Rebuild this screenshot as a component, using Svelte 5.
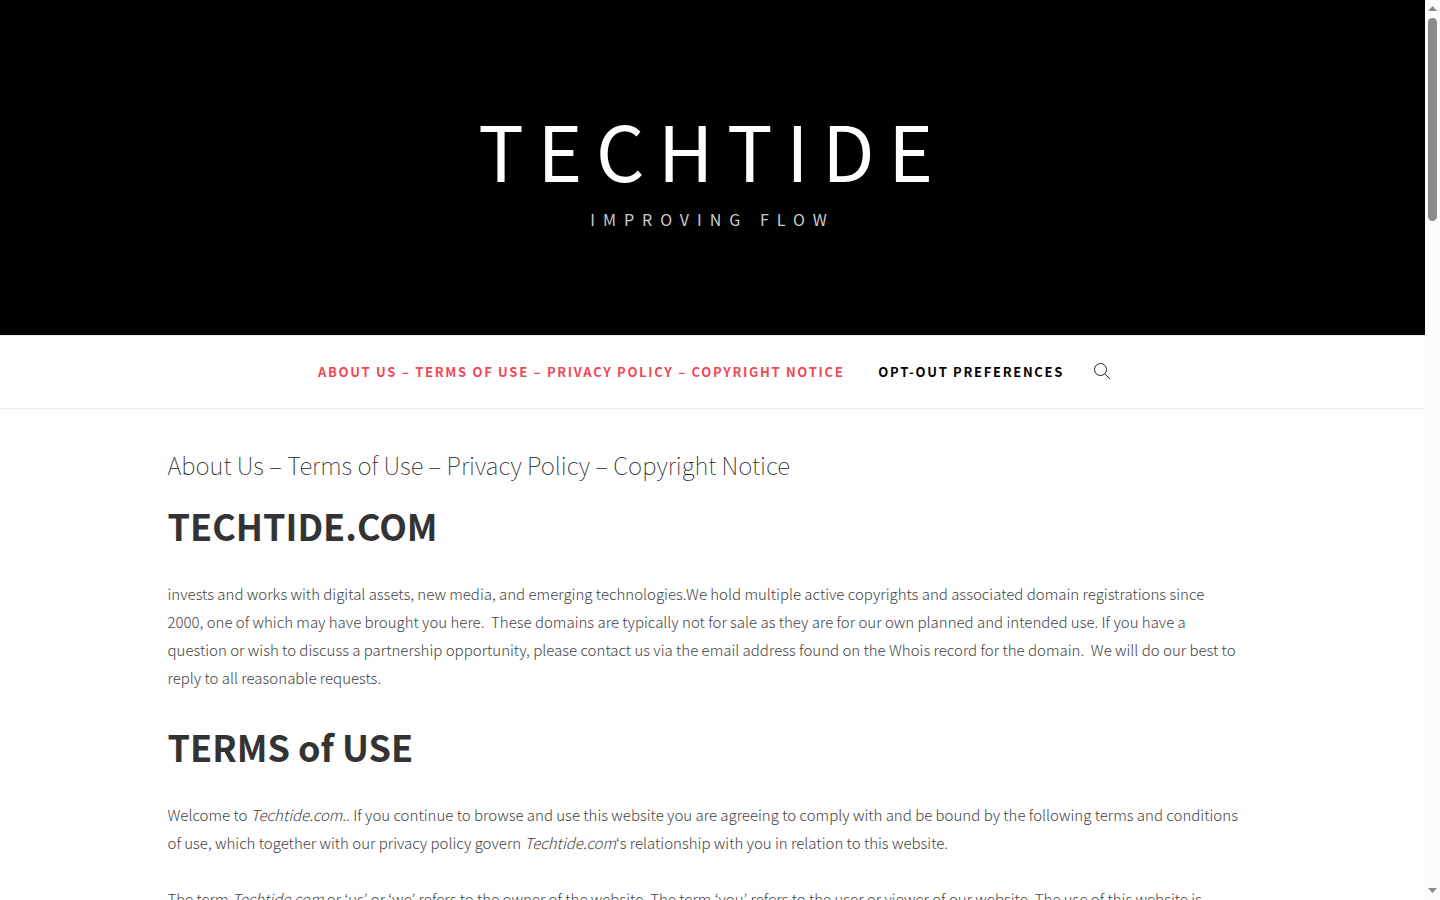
<script>
  const navLinks = [
    { label: "About Us – Terms of Use – Privacy Policy – Copyright Notice", href: "#about", current: true },
    { label: "Opt-out preferences", href: "#opt-out", current: false }
  ];
</script>

<div class="viewport">
  <div class="page">
    <header class="masthead">
      <a class="site-title" href="#home">TECHTIDE</a>
      <p class="tagline">IMPROVING FLOW</p>
    </header>

    <nav class="main-nav" aria-label="Primary">
      {#each navLinks as link}
        <a href={link.href} class:current={link.current} aria-current={link.current ? "page" : undefined}>{link.label}</a>
      {/each}
      <button type="button" class="search" aria-label="Search">
        <svg viewBox="0 0 18 18" aria-hidden="true" focusable="false">
          <circle cx="7.5" cy="7.5" r="6" />
          <path d="M11.8 11.8 17 17" />
        </svg>
      </button>
    </nav>

    <main class="content">
      <h1>About Us – Terms of Use – Privacy Policy – Copyright Notice</h1>

      <h2>TECHTIDE.COM</h2>
      <p>
        invests and works with digital assets, new media, and emerging technologies.We hold multiple active copyrights and associated domain registrations since 2000, one of which may have brought you here.&nbsp; These domains are typically not for sale as they are for our own planned and intended use. If you have a question or wish to discuss a partnership opportunity, please contact us via the email address found on the Whois record for the domain.&nbsp; We will do our best to reply to all reasonable requests.
      </p>

      <h2>TERMS of USE</h2>
      <p>
        Welcome to <em>Techtide.com.</em>. If you continue to browse and use this website you are agreeing to comply with and be bound by the following terms and conditions of use, which together with our privacy policy govern <em>Techtide.com</em>‘s relationship with you in relation to this website.
      </p>
      <p>
        The term <em>Techtide.com</em> or ‘us’ or ‘we’ refers to the owner of the website. The term ‘you’ refers to the user or viewer of our website. The use of this website is
      </p>
    </main>
  </div>

  <div class="scrollbar" aria-hidden="true">
    <svg viewBox="0 0 15 18"><path d="M3 11h9L7.5 6z" /></svg>
    <div class="track"><div class="thumb"></div></div>
    <svg viewBox="0 0 15 18"><path d="M3 6h9L7.5 11z" /></svg>
  </div>
</div>

<style>
  :global(body) {
    margin: 0;
    background: #fefefe;
  }

  .viewport {
    display: flex;
    height: 100vh;
    overflow: hidden;
    font-family: "Source Sans Pro", "Noto Sans CJK KR", sans-serif;
    color: #333;
  }

  .page {
    flex: 1;
    min-width: 0;
  }

  .masthead {
    padding: 94px 24px 102px;
    text-align: center;
    color: #fff;
    background: #000;
  }

  .site-title {
    display: block;
    font-size: 76px;
    line-height: 111px;
    letter-spacing: 0.18em;
    color: inherit;
    text-decoration: none;
  }

  .tagline {
    margin: 0;
    font-size: 16px;
    line-height: 28px;
    letter-spacing: 0.5em;
    color: #ccc;
  }

  .main-nav {
    display: flex;
    justify-content: center;
    align-items: center;
    gap: 34px;
    height: 70px;
    padding: 0 0 2px 4px;
    border-top: 1px solid #eee;
    border-bottom: 1px solid #eee;
    background: #fff;
  }

  .main-nav a {
    font-size: 13px;
    font-weight: 700;
    letter-spacing: 0.13em;
    text-transform: uppercase;
    text-decoration: none;
    color: #000;
  }

  .main-nav a.current {
    color: #ef4856;
  }

  .search {
    width: 18px;
    height: 18px;
    margin-left: -5px;
    padding: 0;
    border: 0;
    background: transparent;
    cursor: pointer;
  }

  .search svg {
    display: block;
    fill: none;
    stroke: #222;
  }

  .content {
    max-width: 1090px;
    margin: 0 auto;
    padding: 35px 24px 0;
  }

  h1 {
    margin: 0 0 13px;
    font-size: 24px;
    font-weight: 100;
    line-height: 42px;
    color: #222;
  }

  h2 {
    margin: 0 0 29px;
    font-size: 36px;
    font-weight: 700;
    line-height: 52px;
  }

  .content p {
    max-width: 1073px;
    margin: 0 0 28px;
    font-size: 15px;
    font-weight: 300;
    line-height: 28px;
    color: #444;
  }

  .scrollbar {
    display: flex;
    flex-direction: column;
    width: 15px;
    background: #fcfcfc;
  }

  .scrollbar svg {
    height: 18px;
    fill: #8b8b8b;
  }

  .track {
    flex: 1;
    padding: 0 3px;
  }

  .thumb {
    height: 203px;
    border-radius: 5px;
    background: #8b8b8b;
  }
</style>
